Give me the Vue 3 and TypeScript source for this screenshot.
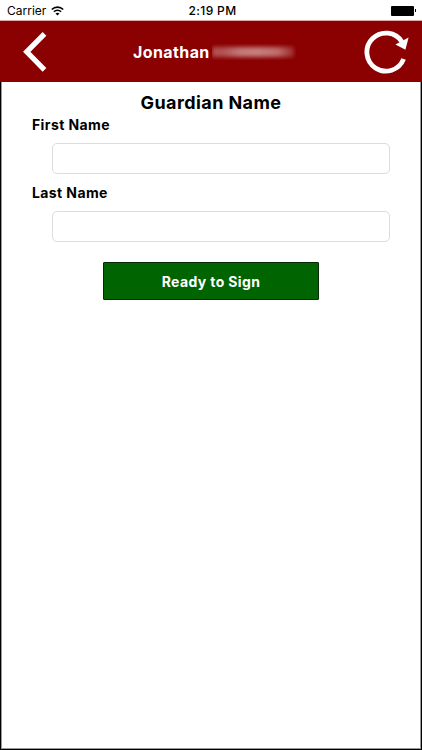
<script setup lang="ts">
import { ref } from 'vue'

const firstName = ref<string>('')
const lastName = ref<string>('')
</script>

<template>
  <div class="screen">
    <div class="status">
      <div class="carrier">
        <span>Carrier</span>
        <svg class="wifi" width="13" height="10" viewBox="0 0 13 10" fill="none" stroke="#000" stroke-width="1.6">
          <path d="M0.8 3.5a8 8 0 0 1 11.4 0" />
          <path d="M2.9 5.8a5.1 5.1 0 0 1 7.2 0" />
          <path d="M6.5 9.6L4.5 7.6a2.9 2.9 0 0 1 4 0z" fill="#000" stroke="none" />
        </svg>
      </div>
      <span class="time">2:19 PM</span>
      <div class="battery"><i class="cell"></i><i class="cap"></i></div>
    </div>
    <header class="nav">
      <svg class="back" width="24" height="42" viewBox="0 0 24 42" fill="none" stroke="#fff" stroke-width="5.2">
        <path d="M21.5 2.8L3.7 20.8L21.5 38.8" />
      </svg>
      <h1 class="title"><span class="given">Jonathan</span><span class="redacted"><i class="smudge"></i></span></h1>
      <svg class="reload" width="46" height="46" viewBox="0 0 46 46">
        <path d="M39.6 30A19 19 0 1 1 38 13" fill="none" stroke="#fff" stroke-width="4.8" />
        <path d="M31.4 15.4L44.6 8.6L41.4 20.8z" fill="#fff" />
      </svg>
    </header>
    <main class="body">
      <h2 class="heading">Guardian Name</h2>
      <label class="label first" for="first">First Name</label>
      <input id="first" v-model="firstName" class="field" type="text" />
      <label class="label last" for="last">Last Name</label>
      <input id="last" v-model="lastName" class="field" type="text" />
      <button class="sign" type="button">Ready to Sign</button>
    </main>
  </div>
</template>

<style>
body {
  background: #fff;
}
</style>

<style scoped>
.screen {
  display: flex;
  flex-direction: column;
  width: 422px;
  height: 750px;
  overflow: hidden;
  font-family: Inter, "Liberation Sans", sans-serif;
  color: #000;
  background: #fff;
}
.status {
  display: grid;
  grid-template-columns: 1fr auto 1fr;
  align-items: center;
  box-sizing: border-box;
  height: 21px;
  padding: 1px 6px 0 7px;
  border-bottom: 1px solid #dcaaaa;
  font-size: 12px;
  line-height: 19px;
}
.carrier {
  display: flex;
  align-items: center;
  gap: 5px;
}
.time {
  padding-left: 2px;
  font-weight: 500;
  letter-spacing: 0.35px;
}
.battery {
  display: flex;
  align-items: center;
  justify-content: flex-end;
  gap: 1px;
}
.cell {
  width: 23px;
  height: 10px;
  border-radius: 1px;
  background: #000;
}
.cap {
  width: 1px;
  height: 3px;
  background: #000;
}
.nav {
  display: grid;
  grid-template-columns: 110px 1fr auto;
  align-items: center;
  box-sizing: border-box;
  height: 61px;
  padding: 0 12px 0 23px;
  background: #8b0000;
}
.title {
  display: flex;
  align-items: center;
  margin: 0;
  color: #fff;
  font-size: 16px;
  font-weight: 650;
  line-height: 20px;
  letter-spacing: 0.4px;
}
.redacted {
  width: 84px;
  height: 16px;
  margin-left: 2px;
  overflow: hidden;
}
.smudge {
  display: block;
  width: 82px;
  height: 10px;
  margin-top: 3px;
  filter: blur(2px);
  background: linear-gradient(90deg, #b45454, #b05050 12%, #c27a7a 35%, #c68080 55%, #be6e6e 80%, #9c2828);
}
.body {
  display: flex;
  flex: 1;
  flex-direction: column;
  box-sizing: border-box;
  padding: 10px 30px 0;
  border: 1px solid #000;
  border-top: 0;
  box-shadow: inset 1px 0 #999, inset -1px -1px #999;
}
.heading {
  align-self: center;
  margin: 0;
  font-size: 18px;
  font-weight: 650;
  line-height: 22px;
  letter-spacing: 0.42px;
}
.label {
  padding-left: 1px;
  font-size: 14px;
  font-weight: 650;
  line-height: 18px;
  letter-spacing: 0.4px;
}
.first {
  margin: 2px 0 9px;
}
.last {
  margin: 10px 0 9px;
}
.field {
  box-sizing: border-box;
  width: 338px;
  height: 31px;
  margin-left: 21px;
  padding: 0 7px;
  border: 1px solid #dcdcdc;
  border-radius: 5px;
  outline: none;
  background: #fff;
  font: inherit;
}
.sign {
  align-self: center;
  box-sizing: border-box;
  width: 216px;
  height: 38px;
  margin-top: 20px;
  padding: 1px 0 0;
  border: 1px solid #062806;
  border-radius: 1px;
  background: #006400;
  color: #fff;
  font: 650 14px/18px Inter, "Liberation Sans", sans-serif;
  letter-spacing: 0.38px;
}
</style>
